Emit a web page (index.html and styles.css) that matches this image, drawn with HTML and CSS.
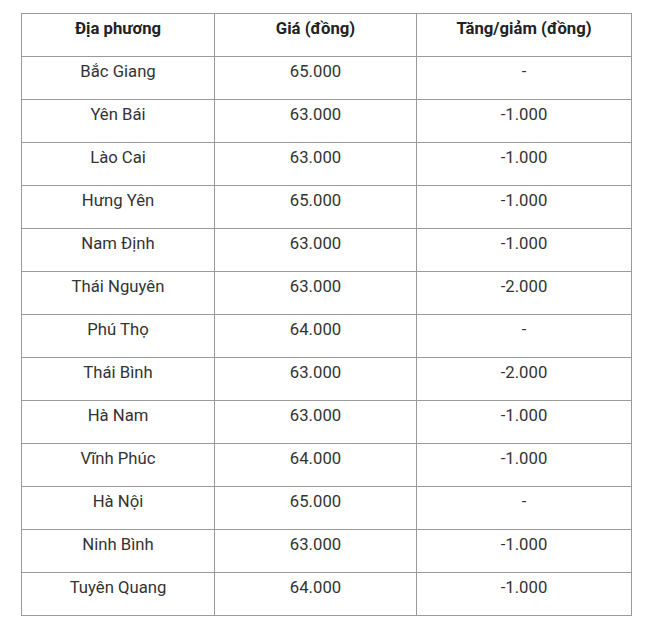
FILE: index.html
```html
<!DOCTYPE html>
<html lang="vi">
<head>
<meta charset="utf-8">
<link rel="stylesheet" href="styles.css">
</head>
<body>
<table class="price-table">
  <colgroup>
    <col class="c1"><col class="c2"><col class="c3">
  </colgroup>
  <thead>
    <tr><th>Địa phương</th><th>Giá (đồng)</th><th>Tăng/giảm (đồng)</th></tr>
  </thead>
  <tbody>
    <tr><td>Bắc Giang</td><td>65.000</td><td>-</td></tr>
    <tr><td>Yên Bái</td><td>63.000</td><td>-1.000</td></tr>
    <tr><td>Lào Cai</td><td>63.000</td><td>-1.000</td></tr>
    <tr><td>Hưng Yên</td><td>65.000</td><td>-1.000</td></tr>
    <tr><td>Nam Định</td><td>63.000</td><td>-1.000</td></tr>
    <tr><td>Thái Nguyên</td><td>63.000</td><td>-2.000</td></tr>
    <tr><td>Phú Thọ</td><td>64.000</td><td>-</td></tr>
    <tr><td>Thái Bình</td><td>63.000</td><td>-2.000</td></tr>
    <tr><td>Hà Nam</td><td>63.000</td><td>-1.000</td></tr>
    <tr><td>Vĩnh Phúc</td><td>64.000</td><td>-1.000</td></tr>
    <tr><td>Hà Nội</td><td>65.000</td><td>-</td></tr>
    <tr><td>Ninh Bình</td><td>63.000</td><td>-1.000</td></tr>
    <tr><td>Tuyên Quang</td><td>64.000</td><td>-1.000</td></tr>
  </tbody>
</table>
</body>
</html>
```
FILE: styles.css
```css
html, body {
  margin: 0;
  padding: 0;
  background: #fff;
}
body {
  padding: 13px 0 0 21px;
  font-family: Roboto, "Liberation Sans", Arial, sans-serif;
  font-size: 16.7px;
  color: #333;
}
.price-table {
  border-collapse: collapse;
  table-layout: fixed;
  width: 610px;
}
.c1 { width: 193px; }
.c2 { width: 202px; }
.c3 { width: 215px; }
.price-table th,
.price-table td {
  border: 1px solid #9a9a9a;
  text-align: center;
  vertical-align: top;
  height: 43px;
  box-sizing: border-box;
  padding: 3px 8px 0;
  line-height: 24px;
}
.price-table th {
  font-weight: 700;
  color: #222;
}
.price-table td {
  font-weight: 400;
}
```
